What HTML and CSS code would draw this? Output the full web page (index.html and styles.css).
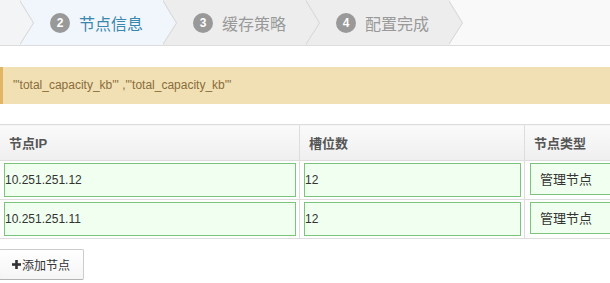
FILE: index.html
```html
<!DOCTYPE html>
<html lang="zh-CN">
<head>
    <meta charset="UTF-8">
    <title>添加节点</title>
    <link rel="stylesheet" href="styles.css">
</head>
<body>

    <!-- 向导步骤 (第一步在左侧已滚出视野) -->
    <div class="wizard">
        <ul class="steps">
            <li class="complete"></li>
            <li class="active"><span class="badge">2</span>节点信息</li>
            <li><span class="badge">3</span>缓存策略</li>
            <li><span class="badge">4</span>配置完成</li>
        </ul>
    </div>

    <div class="alert">"'total_capacity_kb'" ,"'total_capacity_kb'"</div>

    <table class="node-table">
        <thead>
            <tr>
                <th class="col-ip">节点IP</th>
                <th class="col-slot">槽位数</th>
                <th>节点类型</th>
            </tr>
        </thead>
        <tbody>
            <tr>
                <td><input class="cell-input" type="text" value="10.251.251.12"></td>
                <td><input class="cell-input" type="text" value="12"></td>
                <td><select class="cell-select"><option>管理节点</option></select></td>
            </tr>
            <tr>
                <td><input class="cell-input" type="text" value="10.251.251.11"></td>
                <td><input class="cell-input" type="text" value="12"></td>
                <td><select class="cell-select"><option>管理节点</option></select></td>
            </tr>
        </tbody>
    </table>

    <button class="btn-add">
        <svg class="icon-plus" width="9" height="9" viewBox="0 0 9 9"><rect x="3.2" y="0" width="2.6" height="9" fill="#333"/><rect x="0" y="3.2" width="9" height="2.6" fill="#333"/></svg>添加节点
    </button>

</body>
</html>
```

FILE: styles.css
```css
body {
    margin: 0;
    font-family: "Liberation Sans", "Noto Sans CJK SC", sans-serif;
    font-size: 12px;
    color: #333;
    background: #fff;
    overflow: hidden;
}

/* 向导 */
.wizard {
    background: #f9f9f9;
    border-bottom: 1px solid #dcdcdc;
    height: 45px;
    overflow: hidden;
}

.steps {
    list-style: none;
    margin: 0 0 0 -123px;
    padding: 0;
    display: flex;
}

.steps li {
    position: relative;
    box-sizing: border-box;
    width: 143px;
    height: 45px;
    padding-left: 30px;
    display: flex;
    align-items: center;
    background: #ededed;
    color: #999;
    font-size: 16px;
    white-space: nowrap;
}

.steps li::before,
.steps li::after {
    content: "";
    position: absolute;
    top: 0;
    border-top: 23px solid transparent;
    border-bottom: 22px solid transparent;
    border-left: 14px solid #d4d4d4;
    z-index: 1;
}

.steps li::before {
    right: -14px;
}

.steps li::after {
    right: -13px;
    border-left-color: #ededed;
    z-index: 2;
}

.steps li.active {
    background: #f1f6fc;
    color: #3a87ad;
}

.steps li.active::after {
    border-left-color: #f1f6fc;
}

.steps li.complete {
    background: #f3f4f5;
    color: #468847;
}

.steps li.complete::after {
    border-left-color: #f3f4f5;
}

.badge {
    width: 20px;
    height: 20px;
    margin-right: 9px;
    border-radius: 50%;
    background: #999;
    color: #fff;
    font-size: 12px;
    font-weight: bold;
    display: flex;
    align-items: center;
    justify-content: center;
    flex-shrink: 0;
}

/* 提示 */
.alert {
    margin-top: 21px;
    padding: 11px 10px;
    line-height: 15px;
    background: #f0e0b4;
    border-left: 3px solid #e2b565;
    color: #8a6d3b;
}

/* 表格 */
.node-table {
    margin: 20px 0 0 -1px;
    width: 720px;
    border-collapse: collapse;
    table-layout: fixed;
}

.node-table th {
    height: 35px;
    padding: 0 9px;
    text-align: left;
    font-size: 13px;
    font-weight: bold;
    color: #555;
    background: linear-gradient(#fafafa, #efefef);
    border: 1px solid #dddddd;
}

.col-ip { width: 281px; }
.col-slot { width: 206px; }

.node-table td {
    padding: 2px 3px 2px 4px;
    border: 1px solid #dddddd;
    background: #fff;
    vertical-align: top;
}

.cell-input {
    box-sizing: border-box;
    width: 100%;
    height: 34px;
    margin: 0;
    padding: 0;
    border: 1px solid #7cc47c;
    background: #f0fff0;
    font-family: "Liberation Sans", sans-serif;
    font-size: 12px;
    color: #333;
    outline: none;
}

.cell-select {
    appearance: none;
    box-sizing: border-box;
    width: 160px;
    height: 32px;
    margin: 0 0 0 1px;
    padding: 0 9px;
    border: 1px solid #7cc47c;
    border-radius: 0;
    background: #f0fff0;
    font-family: "Liberation Sans", "Noto Sans CJK SC", sans-serif;
    font-size: 13px;
    color: #333;
}

/* 按钮 */
.btn-add {
    margin: 10px 0 0 -1px;
    height: 31px;
    padding: 0 13px 0 12px;
    display: flex;
    align-items: center;
    border: 1px solid #ccc;
    border-bottom-color: #b3b3b3;
    border-radius: 2px;
    background: linear-gradient(#ffffff, #f5f5f5);
    font-family: "Liberation Sans", "Noto Sans CJK SC", sans-serif;
    font-size: 12px;
    color: #333;
}

.icon-plus {
    margin-right: 1px;
}
```
